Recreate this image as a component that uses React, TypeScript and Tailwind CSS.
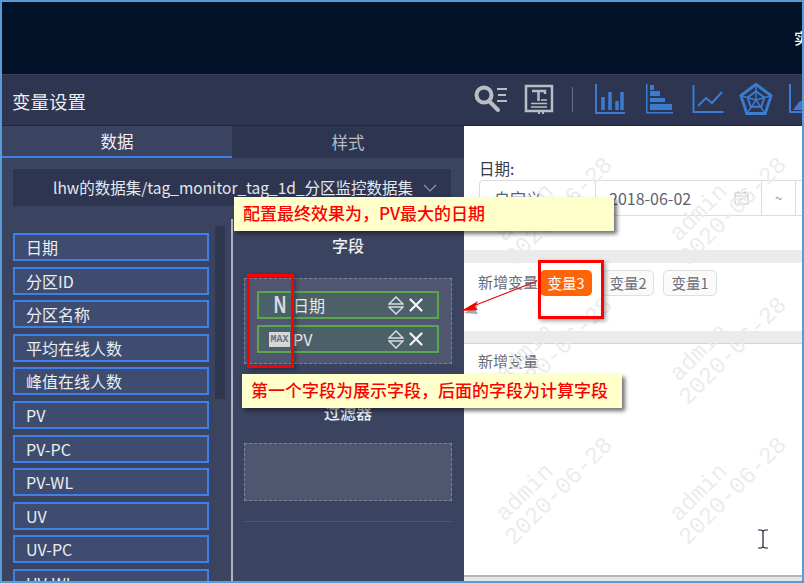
import React from 'react';
import { X, ChevronDown } from 'lucide-react';

const fields = ['日期', '分区ID', '分区名称', '平均在线人数', '峰值在线人数', 'PV', 'PV-PC', 'PV-WL', 'UV', 'UV-PC', 'UV-WL'];
const marks = [
  { x: 552, y: 202 }, { x: 726, y: 202 },
  { x: 552, y: 342 }, { x: 726, y: 342 },
  { x: 552, y: 482 }, { x: 726, y: 482 },
];

const FONT = "font-['Noto_Sans_CJK_SC','Noto_Sans',sans-serif]";

const ToolIcons: React.FC = () => (
  <div className="flex items-center h-full">
    <svg width="36" height="30" viewBox="0 0 36 30" fill="none" stroke="#b9bcc4" className="ml-[473px] shrink-0">
      <circle cx="11" cy="11" r="7.5" strokeWidth="4" />
      <path d="M16 17l9 9" strokeWidth="4" strokeLinecap="round" />
      <path d="M24 5h10M25 11h8M24 17h10" strokeWidth="2" />
    </svg>
    <svg width="30" height="30" viewBox="0 0 30 30" fill="none" stroke="#b9bcc4" className="ml-[15px] shrink-0">
      <path d="M2 2h26v25H2z" strokeWidth="2.500" />
      <path d="M8 7h13v3M14.500 7v10" strokeWidth="2.500" />
      <path d="M17 16h6M7 19.500h16M7 23h16" strokeWidth="1.500" />
      <path d="M14 29h2M18 29h2" strokeWidth="2" />
    </svg>
    <div className="w-px h-[25px] bg-[#666d80] ml-[18px] shrink-0" />
    <svg width="32" height="32" viewBox="0 0 32 32" fill="none" stroke="#3b7cd0" className="ml-[21px] shrink-0">
      <path d="M2 1v29h29" strokeWidth="2" />
      <path d="M9 27V14M16 27V9M23 27V18M28 27V9" strokeWidth="3.500" />
    </svg>
    <svg width="28" height="30" viewBox="0 0 28 30" fill="#3b7cd0" stroke="none" className="ml-[19px] shrink-0">
      <path d="M1 0h1.500v28H28v1.500H1z" />
      <path d="M5 1h4v5H5zM5 7h10v5H5zM5 14h15v4H5zM5 20h22v6H5z" />
    </svg>
    <svg width="32" height="30" viewBox="0 0 32 30" fill="none" stroke="#3b7cd0" className="ml-[19px] shrink-0">
      <path d="M1.500 1v27h30" strokeWidth="2" />
      <path d="M6 22l8-8 6 5 10-11" strokeWidth="2" />
    </svg>
    <svg width="34" height="34" viewBox="0 0 35 34" fill="none" stroke="#3b7cd0" className="ml-[15px] shrink-0">
      <path d="M17.500 2L33 13.500 27 32H8L2 13.500z" strokeWidth="3" />
      <path d="M17.500 9L26 15.500 23 25H12L9 15.500z" strokeWidth="2" />
      <path d="M17.500 2v16M33 13.500L17.500 18M27 32L17.500 18M8 32l9.500-14M2 13.500L17.500 18" strokeWidth="1.500" />
    </svg>
    <svg width="14" height="30" viewBox="0 0 14 30" fill="none" className="ml-[16px] shrink-0">
      <path d="M1 0v28h13" stroke="#3b7cd0" strokeWidth="2" />
      <path d="M4 26l6-8 4-2v10z" fill="#3b7cd0" />
    </svg>
  </div>
);

const SortIcon: React.FC = () => (
  <svg width="16" height="19" viewBox="0 0 16 19" fill="none" stroke="#d8dbe0" strokeWidth="1.500">
    <path d="M1 8l7-7 7 7z" />
    <path d="M1 11l7 7 7-7z" />
  </svg>
);

const DropItem: React.FC<{ badge: string; label: string; wide?: boolean }> = ({ badge, label, wide }) => (
  <div className="h-[28px] border-2 border-[#5aa74c] bg-[#4b6067] flex items-center text-[#e8e8ea] text-[16px]">
    {wide ? (
      <span className="ml-[10px] w-[21px] h-[15px] bg-[#d5d6da] text-[#6b7078] text-[10px] font-bold leading-[15px] text-center font-['Liberation_Mono',monospace]">
        {badge}
      </span>
    ) : (
      <span className="ml-[13px] w-[14px] h-[22px] text-[#d9dade] text-[23px] font-bold leading-[22px] text-center scale-x-75 font-['Liberation_Sans',sans-serif]">
        {badge}
      </span>
    )}
    <span className={`${wide ? 'ml-[3px]' : 'ml-[7px]'} flex-1`}>{label}</span>
    <SortIcon />
    <X size={22} strokeWidth={2.500} color="#f2f2f2" className="ml-[1px] mr-[10px]" />
  </div>
);

const Note: React.FC<{ className: string; children: React.ReactNode }> = ({ className, children }) => (
  <div className={`absolute h-[34px] w-[380px] bg-[#ffffcc] text-[#ff0000] text-[17px] font-medium leading-[32px] shadow-[3px_3px_4px_rgba(20,20,30,0.6)] ${className}`}>
    {children}
  </div>
);

export default function App() {
  return (
    <div className={`relative w-[804px] h-[583px] overflow-hidden border-2 border-[#5b9bd5] bg-white flex flex-col ${FONT}`}>
      <div className="h-[72px] shrink-0 bg-[#011229] flex justify-end items-center overflow-hidden">
        <span className="text-white text-[15px] font-medium mr-[-7px]">实</span>
      </div>

      <div className="h-[52px] shrink-0 bg-[#2d3551] border-t border-[#3a4158] border-b border-b-[#20263c] relative">
        <span className="absolute left-[10px] top-[13px] text-[18.5px] text-[#eceef2] leading-[26px]">变量设置</span>
        <div className="absolute left-[-2px] top-[-1px] h-full"><ToolIcons /></div>
      </div>

      <div className="flex flex-1 min-h-0">
        <div className="w-[462px] shrink-0 bg-[#3a4360] flex flex-col overflow-hidden">
          <div className="flex h-[32px] shrink-0 text-[16.5px]">
            <div className="w-[230px] bg-[#3a4360] border-b-2 border-[#3d80e8] text-[#eef0f3] flex items-center justify-center">数据</div>
            <div className="flex-1 bg-[#2d3551] text-[#b9bcc4] flex items-center justify-center">样式</div>
          </div>

          <div className="ml-[11px] mr-[13px] mt-[11px] h-[37px] shrink-0 bg-[#2d3551] relative text-[#e6e7ea] text-[15.500px] leading-[37px] pl-[40px] whitespace-nowrap">
            lhw的数据集/tag_monitor_tag_1d_分区监控数据集
            <svg width="14" height="8" viewBox="0 0 14 8" fill="none" stroke="#8f95a6" strokeWidth="1.200" className="absolute right-[14px] top-[15px]">
              <path d="M1 1l6 6 6-6" />
            </svg>
          </div>

          <div className="flex flex-1 min-h-0 mt-[13px]">
            <div className="w-[229px] shrink-0 flex pt-[14px] pl-[11px] overflow-hidden">
              <div className="w-[196px] shrink-0 flex flex-col gap-[5.6px]">
                {fields.map((f) => (
                  <div key={f} className="h-[28px] shrink-0 border-2 border-[#3d80e8] bg-[#3e4c70] text-[#eceef0] text-[16px] leading-[24px] pl-[11px]">
                    {f}
                  </div>
                ))}
              </div>
              <div className="w-[10px] h-[173px] ml-[6px] mt-[-7px] bg-[#2f3650]" />
            </div>

            <div className="flex-1 border-l-2 border-[#aeb3bf] pl-[11px] pr-[12px] flex flex-col">
              <div className="text-[#eceef0] text-[16px] font-medium text-center mt-[15px] leading-[22px]">字段</div>
              <div className="mt-[22px] h-[86px] shrink-0 bg-[#50566f] border border-dashed border-[#7d8296] px-[12px] pt-[12px] flex flex-col gap-[6px]">
                <DropItem badge="N" label="日期" />
                <DropItem badge="MAX" label="PV" wide />
              </div>
              <div className="text-[#eceef0] text-[16px] font-medium text-center mt-[37px] leading-[22px]">过滤器</div>
              <div className="mt-[20px] h-[58px] shrink-0 bg-[#50566f] border border-dashed border-[#7d8296]" />
              <div className="mt-[20px] h-px bg-[#4f5670]" />
            </div>
          </div>
        </div>

        <div className="flex-1 flex flex-col relative overflow-hidden">
          <div className="h-[124px] shrink-0 pt-[31px] pl-[15px]">
            <div className="text-[15.500px] text-[#333a48] leading-[22px]">日期:</div>
            <div className="mt-[1px] h-[36px] w-[400px] rounded-l-[4px] border border-[#dcdcdc] flex items-center text-[16px] text-[#5d6270]">
              <span className="w-[116px] pl-[14px] border-r border-[#dcdcdc] h-full leading-[34px] relative">
                自定义
                <ChevronDown size={12} color="#b0b0b0" className="absolute right-[14px] top-[11px]" />
              </span>
              <span className="w-[165px] pl-[13px] relative">
                2018-06-02
                <svg width="15" height="14" viewBox="0 0 15 14" fill="none" stroke="#c4c4c4" className="absolute right-[12px] top-[5px]">
                  <path d="M1 2h13v11H1zM1 5h13M4 0v3M11 0v3M4 8h5M4 10.500h3" />
                </svg>
              </span>
              <span className="w-[34px] text-center border-l border-[#dcdcdc] h-full leading-[34px] text-[13px] text-[#999]">~</span>
              <span className="h-full border-l border-[#dcdcdc]" />
            </div>
          </div>
          <div className="h-[13px] shrink-0 bg-[#ebebeb]" />
          <div className="h-[68px] shrink-0 flex pl-[14px] pt-[7px] text-[14.500px] text-[#666c78]">
            <span className="w-[62px] text-[15px] leading-[24px] whitespace-nowrap">新增变量</span>
            <div className="flex gap-[9px] h-[26px]">
              <span className="w-[52px] rounded-[5px] bg-[#ff6408] text-white text-center leading-[26px]">变量3</span>
              <span className="w-[52px] ml-[1px] rounded-[5px] border border-[#dfdfdf] bg-[#fafafa] text-center leading-[24px]">变量2</span>
              <span className="w-[54px] rounded-[5px] border border-[#dfdfdf] bg-[#fafafa] text-center leading-[24px]">变量1</span>
            </div>
          </div>
          <div className="h-[13px] shrink-0 bg-[#ebebeb] border-b border-[#d4d4d4]" />
          <div className="flex-1 pl-[14px] pt-[6px] text-[15px] text-[#666c78] leading-[22px]">新增变量</div>
          <div className="h-[6px] shrink-0 bg-[#e6e6e6] border-t-2 border-[#b5b5b5]" />
        </div>
      </div>

      {marks.map((m) => (
        <div
          key={`${m.x}-${m.y}`}
          className="absolute -rotate-45 w-[150px] whitespace-nowrap text-[#ececec] text-[23.5px] leading-[23px] font-['Liberation_Mono',monospace] pointer-events-none"
          style={{ left: m.x - 2 - 72, top: m.y - 2 - 23, transformOrigin: '72px 23px' }}
        >
          <span className="pl-[10px]">admin</span>
          <br />
          2020-06-28
        </div>
      ))}

      <Note className="left-[232px] top-[195px] pl-[9px]">配置最终效果为，PV最大的日期</Note>
      <Note className="left-[240px] top-[372px] pl-[9px]">第一个字段为展示字段，后面的字段为计算字段</Note>

      <div className="absolute left-[245px] top-[272px] w-[47px] h-[94px] border-[3px] border-[#ff0000] shadow-[2px_2px_4px_rgba(20,20,30,0.4)]" />
      <div className="absolute left-[536px] top-[258px] w-[66px] h-[59px] border-[3px] border-[#ff0000] shadow-[2px_2px_4px_rgba(20,20,30,0.4)]" />

      <svg width="90" height="40" viewBox="0 0 90 40" fill="none" className="absolute left-[458px] top-[278px]">
        <path d="M4 33l14-8-2 6 2 3z" fill="#3a3a44" opacity="0.45" />
        <path d="M77 1L8 28" stroke="#e81010" strokeWidth="1.200" />
        <path d="M1 31l17-10-3 6 3 3z" fill="#ff0000" />
      </svg>

      <svg width="14" height="20" viewBox="0 0 14 20" fill="none" stroke="#152234" strokeWidth="1.200" className="absolute left-[754px] top-[527px]">
        <path d="M2 1h3l2 1 2-1h3M7 2v16M2 19h3l2-1 2 1h3" />
      </svg>
    </div>
  );
}
